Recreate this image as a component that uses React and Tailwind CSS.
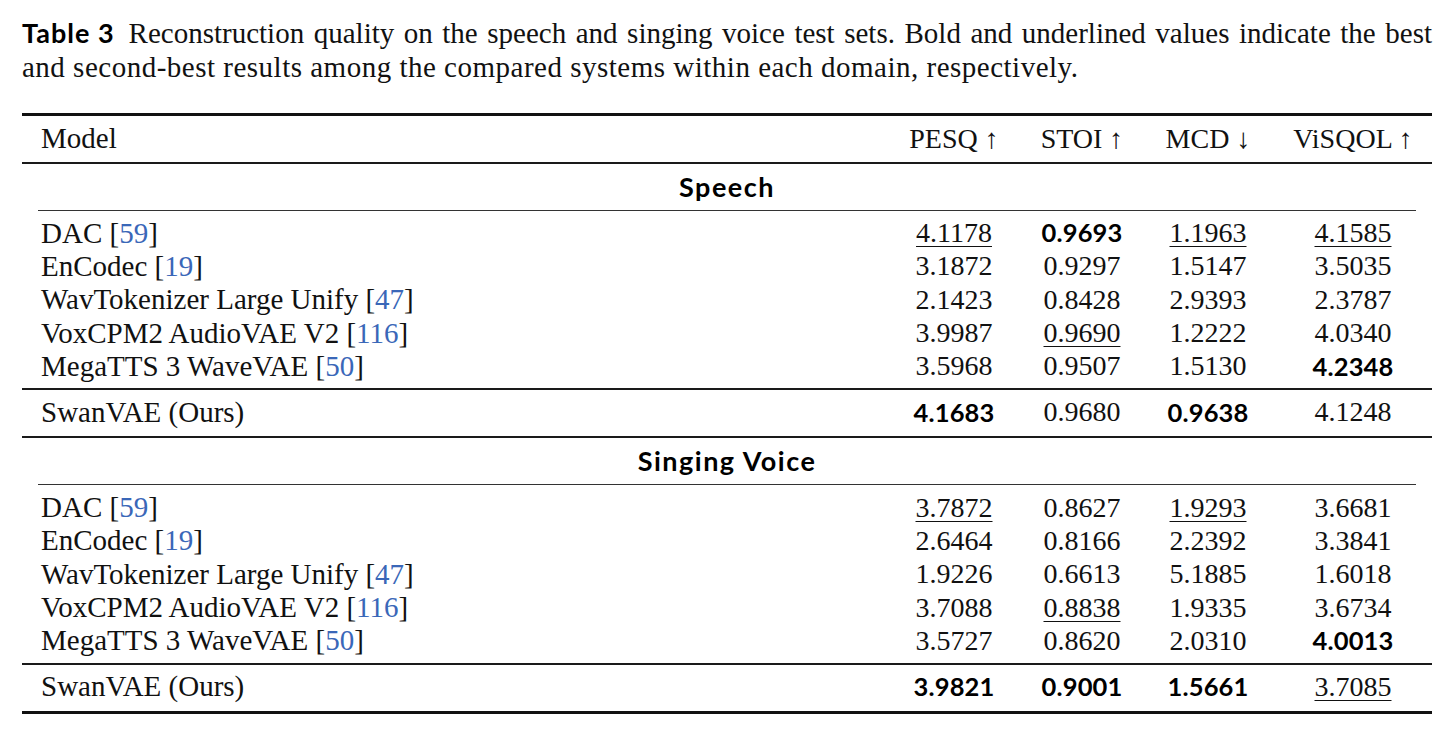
import React from "react";

const serif = "font-['Liberation_Serif',serif]";
const sans = "font-['Lato','Inter',sans-serif]";

const speech = [
  { name: "DAC", cite: "59", v: [["4.1178", "u"], ["0.9693", "b"], ["1.1963", "u"], ["4.1585", "u"]] },
  { name: "EnCodec", cite: "19", v: [["3.1872"], ["0.9297"], ["1.5147"], ["3.5035"]] },
  { name: "WavTokenizer Large Unify", cite: "47", v: [["2.1423"], ["0.8428"], ["2.9393"], ["2.3787"]] },
  { name: "VoxCPM2 AudioVAE V2", cite: "116", v: [["3.9987"], ["0.9690", "u"], ["1.2222"], ["4.0340"]] },
  { name: "MegaTTS 3 WaveVAE", cite: "50", v: [["3.5968"], ["0.9507"], ["1.5130"], ["4.2348", "b"]] },
];
const speechOurs = [["4.1683", "b"], ["0.9680"], ["0.9638", "b"], ["4.1248"]];

const singing = [
  { name: "DAC", cite: "59", v: [["3.7872", "u"], ["0.8627"], ["1.9293", "u"], ["3.6681"]] },
  { name: "EnCodec", cite: "19", v: [["2.6464"], ["0.8166"], ["2.2392"], ["3.3841"]] },
  { name: "WavTokenizer Large Unify", cite: "47", v: [["1.9226"], ["0.6613"], ["5.1885"], ["1.6018"]] },
  { name: "VoxCPM2 AudioVAE V2", cite: "116", v: [["3.7088"], ["0.8838", "u"], ["1.9335"], ["3.6734"]] },
  { name: "MegaTTS 3 WaveVAE", cite: "50", v: [["3.5727"], ["0.8620"], ["2.0310"], ["4.0013", "b"]] },
];
const singingOurs = [["3.9821", "b"], ["0.9001", "b"], ["1.5661", "b"], ["3.7085", "u"]];

const grid = "grid grid-cols-[864px_136px_120px_132px_158px] items-center";

function Val({ v }) {
  const [text, style] = v;
  if (style === "b")
    return <span className={`${sans} font-bold text-[25.5px] tracking-[0.2px] text-black`}>{text}</span>;
  if (style === "u")
    return (
      <span className={`${serif} text-[28px] underline decoration-1 underline-offset-[4px]`}>{text}</span>
    );
  return <span className={`${serif} text-[28px]`}>{text}</span>;
}

function Row({ name, cite, v, h = "h-[33.3px]" }) {
  return (
    <div className={`${grid} ${h} pb-[1px]`}>
      <div className={`${serif} text-[29px] leading-none pl-[19px] whitespace-nowrap`}>
        {name}
        {cite && (
          <>
            {" "}[<span className="text-[#3a67b8]">{cite}</span>]
          </>
        )}
      </div>
      {v.map((x, i) => (
        <div key={i} className="flex justify-center leading-none">
          <Val v={x} />
        </div>
      ))}
    </div>
  );
}

function Section({ title, rows, ours }) {
  return (
    <>
      <div className={`h-[46px] flex items-center justify-center ${sans} font-bold text-[27px] tracking-[1.5px] text-black`}>
        {title}
      </div>
      <div className="mx-[16px] h-[1px] bg-[#333]" />
      <div className="pt-[6px] pb-[5px]">
        {rows.map((r, i) => (
          <Row key={i} {...r} />
        ))}
      </div>
      <div className="h-[2px] bg-[#1a1a1a]" />
      <div className="pt-[6px] pb-[7px]">
        <Row name="SwanVAE (Ours)" v={ours} h="h-[33px]" />
      </div>
    </>
  );
}

export default function App() {
  return (
    <div className="w-[1455px] h-[731px] bg-white text-[#111] pt-[16px] pl-[22px] pr-[23px] overflow-hidden">
      <div className={`${serif} text-[29px]`}>
        <div className="h-[34px] leading-[34px] flex items-baseline whitespace-nowrap">
          <span className={`${sans} font-bold text-[27px] tracking-[1px] text-black mr-[14px]`}>Table 3</span>
          <span className="flex-1 text-justify [text-align-last:justify]">
            Reconstruction quality on the speech and singing voice test sets. Bold and underlined values indicate the best
          </span>
        </div>
        <div className="h-[34px] leading-[34px] whitespace-nowrap tracking-[0.5px]">
          and second-best results among the compared systems within each domain, respectively.
        </div>
      </div>

      <div className="mt-[29px]">
        <div className="h-[3px] bg-[#111]" />
        <div className={`${grid} h-[46px] ${serif} text-[28px]`}>
          <div className="pl-[19px] text-[29px]">Model</div>
          <div className="text-center">PESQ ↑</div>
          <div className="text-center">STOI ↑</div>
          <div className="text-center">MCD ↓</div>
          <div className="text-center">ViSQOL ↑</div>
        </div>
        <div className="h-[2px] bg-[#1a1a1a]" />
        <Section title="Speech" rows={speech} ours={speechOurs} />
        <div className="h-[2px] bg-[#1a1a1a]" />
        <Section title="Singing Voice" rows={singing} ours={singingOurs} />
        <div className="h-[3px] bg-[#111]" />
      </div>
    </div>
  );
}
